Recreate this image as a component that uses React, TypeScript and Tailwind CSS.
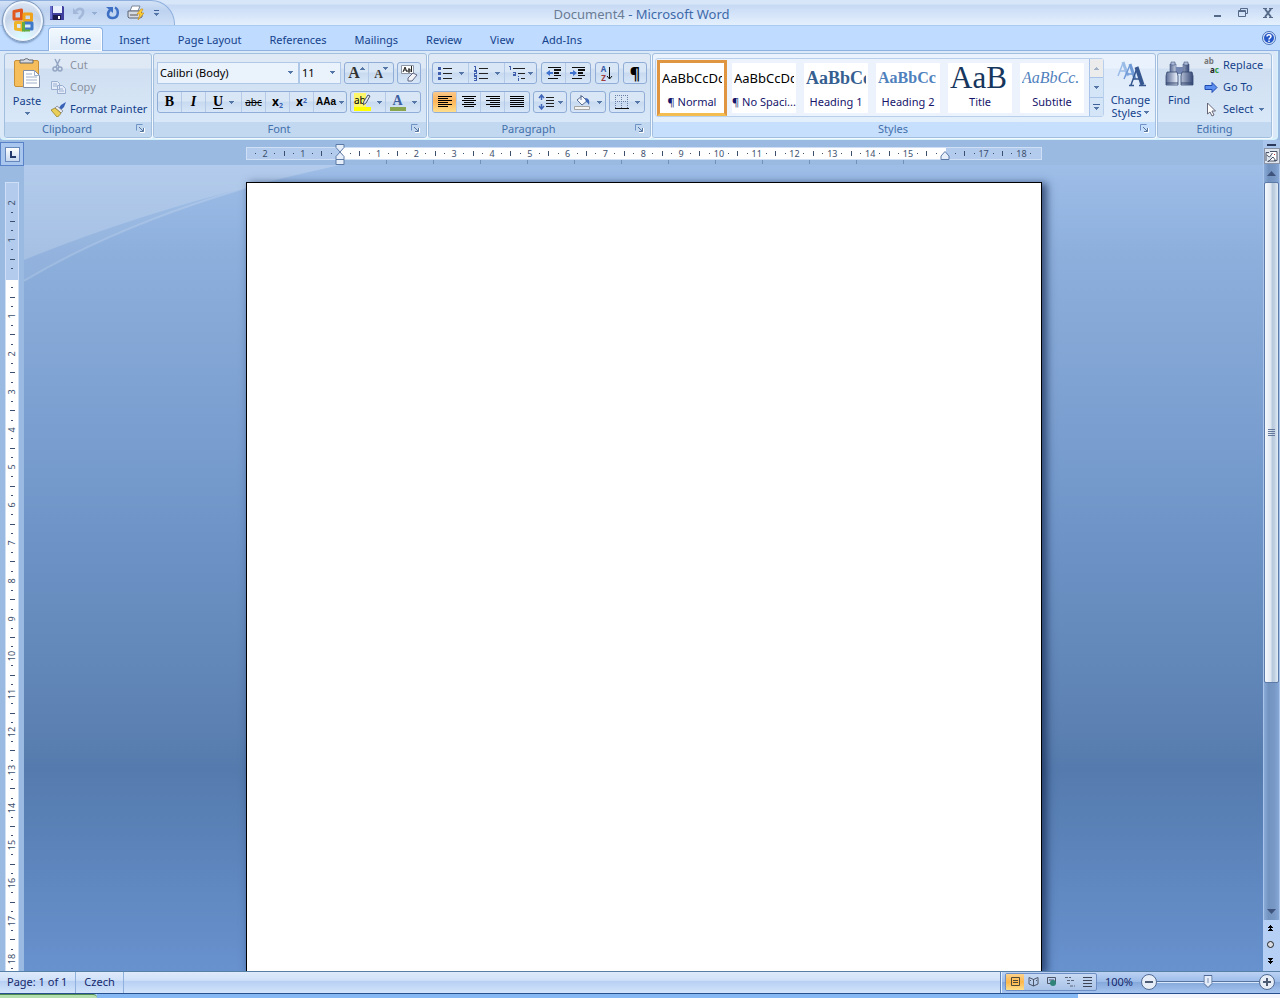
import type { ReactNode } from "react";
import clsx from "clsx";

const tabs = ["Insert", "Page Layout", "References", "Mailings", "Review", "View", "Add-Ins"];

const rulerMarks = Array.from({ length: 85 }, (_, i) => (i - 10) / 4);

function markFor(cm: number) {
  if (cm === 0 || cm === 16 || cm > 18.25) return null;
  if (Number.isInteger(cm)) return String(Math.abs(cm));
  if (Number.isInteger(cm * 2)) return "tick";
  return "dot";
}

function Caret({ className }: { className?: string }) {
  return (
    <svg viewBox="0 0 5 3" className={clsx("h-[3px] w-[5px] shrink-0", className)} shapeRendering="crispEdges" aria-hidden="true">
      <path d="M0 0h5v1H4v1H3v1H2V2H1V1H0z" fill="#5577a8" />
    </svg>
  );
}

function Group({ title, width, launcher = true, active, children }: { title: string; width: string; launcher?: boolean; active?: boolean; children: ReactNode }) {
  return (
    <section
      className={clsx(
        "flex h-[85px] shrink-0 flex-col overflow-hidden rounded-[3px] border border-[#a3bfdf] shadow-[1px_1px_0_#f3f9ff]",
        active
          ? "bg-[linear-gradient(#e9f2fd_0_14px,#dfebfa_15px,#e4effc_68px)]"
          : "bg-[linear-gradient(#dfe9f6_0_14px,#cfdff1_15px,#d9e8f8_68px)]",
        width,
      )}
    >
      <div className="min-h-0 flex-1">{children}</div>
      <div
        className={clsx(
          "relative h-[15px] text-center leading-[14px] text-[#4470ac]",
          active ? "bg-[#c6dffc]" : "bg-[#c1d8f0]",
          launcher && "pr-[22px]",
        )}
      >
        {title}
        {launcher && (
          <button aria-label={`${title} options`} className="absolute right-[6px] top-[2px]">
            <svg width="9" height="9" viewBox="0 0 9 9" fill="none" aria-hidden="true">
              <path d="M.5 6.500v-6h6" stroke="#6f93c4" />
              <path d="M3 3l4 4M7.500 4v3.500H4" stroke="#56759f" />
              <path d="M8.500 4v4.500H4" stroke="#fff" />
            </svg>
          </button>
        )}
      </div>
    </section>
  );
}

function Bar({ children }: { children: ReactNode }) {
  return (
    <div className="flex h-[22px] divide-x divide-[#b4cae6] overflow-hidden rounded-[3px] border border-[#8fadd6] bg-[linear-gradient(#d9e6f6_0_9px,#c8daf0_10px,#d7e6f8)]">
      {children}
    </div>
  );
}

function Tool({ label, width = "w-6", on, menu, children }: { label: string; width?: string; on?: boolean; menu?: boolean; children: ReactNode }) {
  return (
    <button
      aria-label={label}
      className={clsx("flex h-full shrink-0 items-center justify-center text-black", width, on && "bg-[linear-gradient(#fbc88a,#fdb458_45%,#fede8c)]")}
    >
      {children}
      {menu && <Caret className="ml-[6px]" />}
    </button>
  );
}

function Lines({ widths, align }: { widths: number[]; align: "l" | "c" | "r" }) {
  return (
    <svg width="14" height="12" viewBox="0 0 14 12" shapeRendering="crispEdges" aria-hidden="true">
      {widths.map((w, i) => (
        <rect key={i} x={align === "l" ? 0 : align === "r" ? 14 - w : (14 - w) / 2} y={i * 2} width={w} height="1" fill="#000" />
      ))}
    </svg>
  );
}

function OfficeButton() {
  return (
    <button
      aria-label="Office Button"
      className="absolute left-[2px] top-0 z-10 flex size-[42px] items-center justify-center rounded-full border border-[#7d97bb] bg-[radial-gradient(circle_at_50%_95%,#d8ffff,#dce8f6_35%,#c4d3e8_60%,#e9f0f9)] shadow-[inset_0_0_0_2px_#eef5fd,0_1px_2px_#6d8bb5]"
    >
      <svg width="24" height="26" viewBox="0 0 24 26" fill="none" strokeLinejoin="round" aria-hidden="true">
        <path d="M3 3.500 10.500 2v9H3z" stroke="#e2571d" strokeWidth="3" />
        <path d="M13 6h7.500v6.500H13z" stroke="#efa31c" strokeWidth="3" />
        <path d="M4.500 14.500H11V22l-6.500-1z" stroke="#efb52a" strokeWidth="3" />
        <path d="M13 15h8v6h-8" stroke="#3d78c9" strokeWidth="3" />
        <path d="M12.500 14v9.500" stroke="#62ac43" strokeWidth="3" />
        <path d="M13 22.500h6" stroke="#62ac43" strokeWidth="2" />
      </svg>
    </button>
  );
}

function TitleBar() {
  return (
    <header className="relative flex h-[26px] items-center border-b border-[#a8cbf0] bg-[linear-gradient(#d7e6f9_0_4px,#c6d9f4_5px,#e4f0fd)]">
      <div className="flex h-full w-[175px] shrink-0 items-center rounded-tr-[24px] border-r border-t border-[#8fb0de] bg-[linear-gradient(#d3e2f6,#bdd2f0_40%,#cfe0f7)] pl-[50px]">
        <button aria-label="Save" className="flex w-[22px]">
          <svg width="14" height="14" viewBox="0 0 14 14" aria-hidden="true">
            <path d="M0 0h13l1 1v13H0z" fill="#3f3f9e" />
            <path d="M3 0h9v7H3z" fill="#e8eefc" />
            <path d="M3 9h8v5H3z" fill="#1c1c4c" />
            <path d="M8 10h2v3H8z" fill="#fff" />
            <path d="M0 0h2v13H0z" fill="#6a70cf" />
          </svg>
        </button>
        <button aria-label="Undo" className="flex w-[20px]">
          <svg width="14" height="14" viewBox="0 0 14 14" fill="none" aria-hidden="true">
            <path d="M4 5c3-4 8-2 7 2-.5 3-3 3-4 6" stroke="#a3b8d9" strokeWidth="2.500" />
            <path d="M1 2v6h6z" fill="#a3b8d9" />
          </svg>
        </button>
        <button aria-label="Undo list" className="flex w-[14px]">
          <Caret className="opacity-40" />
        </button>
        <button aria-label="Repeat" className="flex w-[21px]">
          <svg width="14" height="14" viewBox="0 0 14 14" fill="none" aria-hidden="true">
            <path d="M9 1.500c4 2 4 10-2 10.500C1 12.500 1 7 4 4" stroke="#3d6fc4" strokeWidth="2.500" />
            <path d="M0 1h7v6z" fill="#3d6fc4" />
          </svg>
        </button>
        <button aria-label="Quick Print" className="flex w-[27px]">
          <svg width="17" height="16" viewBox="0 0 17 16" fill="none" aria-hidden="true">
            <path d="M5 1h8l-2 5H3z" fill="#fff" stroke="#7a8496" />
            <path d="M1 6h12l2 2v4l-2 1H2l-1-1z" fill="#d6dae2" stroke="#5b6474" />
            <path d="M3 10h8" stroke="#555" />
            <path d="M14 4l-4 5h3l-2 6 6-7h-3l2-4z" fill="#ffd23c" stroke="#c98a0b" strokeWidth=".6" />
          </svg>
        </button>
        <button aria-label="Customize Quick Access Toolbar" className="flex flex-col items-center gap-[2px]">
          <span className="h-px w-[5px] bg-[#3f6398]" />
          <Caret />
        </button>
      </div>
      <h1 className="flex-1 pt-[3px] text-center text-[13px] leading-4 text-[#3e6aaa]">
        <span className="text-[#6b7c95]">Document4</span> - Microsoft Word
      </h1>
      <div className="flex w-[172px] shrink-0 items-center justify-end gap-[15px] pr-[7px]">
        <button aria-label="Minimize">
          <svg width="10" height="10" viewBox="0 0 10 10" aria-hidden="true"><path d="M1 7h7v2H1z" fill="#556a88" /></svg>
        </button>
        <button aria-label="Restore">
          <svg width="10" height="9" viewBox="0 0 10 9" fill="none" aria-hidden="true">
            <path d="M2.500 2V.5h7v5H8" stroke="#556a88" />
            <path d="M.5 2.500h7v6h-7zM0 3.500h8" stroke="#556a88" />
          </svg>
        </button>
        <button aria-label="Close">
          <svg width="10" height="10" viewBox="0 0 10 10" fill="none" aria-hidden="true">
            <path d="M2 1l6 8M8 1L2 9" stroke="#556a88" strokeWidth="2" />
            <path d="M0 .5h4M6 .5h4M0 9.500h4M6 9.500h4" stroke="#556a88" />
          </svg>
        </button>
      </div>
    </header>
  );
}

function Tabs() {
  return (
    <nav className="flex h-[25px] items-end gap-1 border-b border-[#8db2e3] bg-[#bfdbff] pl-12 pr-[4px] pt-[2px] text-[#15428b]">
      <button className="-mb-px h-[24px] rounded-t-[4px] border border-b-0 border-[#8db2e3] bg-[linear-gradient(#f2f8fe,#dfebf9)] px-[11px] shadow-[inset_0_0_0_1px_#fff]">
        Home
      </button>
      {tabs.map((tab) => (
        <button key={tab} className="h-[23px] px-3 pt-[2px]">{tab}</button>
      ))}
      <button aria-label="Help" className="mb-[5px] ml-auto">
        <svg width="14" height="14" viewBox="0 0 14 14" fill="none" aria-hidden="true">
          <circle cx="7" cy="7" r="6.500" fill="#dbe8fa" stroke="#4a72b8" />
          <circle cx="7" cy="7" r="5" fill="#2658c8" />
          <path d="M5 5.500C5 3 9 3 9 5.500 9 7 7 7 7 8.500M7 9.500V11" stroke="#fff" strokeWidth="1.500" />
        </svg>
      </button>
    </nav>
  );
}

function ClipboardGroup() {
  return (
    <Group title="Clipboard" width="w-[148px]">
      <div className="flex text-[#15428b]">
        <button className="flex h-[67px] w-[46px] shrink-0 flex-col items-center pr-[2px] pt-[3px]">
          <svg width="28" height="32" viewBox="0 0 28 32" fill="none" aria-hidden="true">
            <rect x="1.500" y="3.500" width="24" height="26" rx="1.500" fill="#f5bd5c" stroke="#c8913a" />
            <path d="M7 6V3h4a3 3 0 0 1 5 0h4v3z" fill="#d5d9df" stroke="#60656f" />
            <path d="M10.500 13.500h11l5 5v12h-16z" fill="#fff" stroke="#8190a8" />
            <path d="M21.500 13.500v5h5M13 20h11M13 23h11M13 26h11M13 17h6" stroke="#9eafc9" />
          </svg>
          <span className="mt-1 leading-4">Paste</span>
          <Caret className="mt-[3px]" />
        </button>
        <div className="flex flex-col leading-[22px]">
          <button className="flex h-[22px] items-center gap-[5px] text-[#8b93a0]">
            <svg width="14" height="14" viewBox="0 0 14 14" fill="none" stroke="#93a5c2" aria-hidden="true">
              <path d="M4 1l4 8M9 1 5 9" strokeWidth="1.500" />
              <circle cx="4" cy="11" r="2" strokeWidth="1.500" />
              <circle cx="9" cy="11" r="2" strokeWidth="1.500" />
            </svg>
            Cut
          </button>
          <button className="flex h-[22px] items-center gap-[4px] text-[#8b93a0]">
            <svg width="15" height="13" viewBox="0 0 15 13" aria-hidden="true">
              <path d="M.5.5h6l2 2v6h-8zM6.500 4.500h5l3 3v5h-8z" fill="#e3ecf8" stroke="#9bb0d0" />
              <path d="M2 3h4M2 5h4M8 8h4M8 10h5" stroke="#9bb0d0" />
            </svg>
            Copy
          </button>
          <button className="flex h-[22px] items-center gap-[3px]">
            <svg width="16" height="15" viewBox="0 0 16 15" aria-hidden="true">
              <path d="M15 0l-5 3-2 3 2 2 3-3z" fill="#3762b8" />
              <path d="M6 4l6 5-2 2-6-5z" fill="#e8eaf0" stroke="#767c8a" strokeWidth=".7" />
              <path d="M4 6l6 5c-1 2-3 4-4 4L0 8c1-1 3-1 4-2z" fill="#e9cf57" stroke="#8a7420" strokeWidth=".7" />
            </svg>
            Format Painter
          </button>
        </div>
      </div>
    </Group>
  );
}

function Combo({ label, value, width }: { label: string; value: string; width: string }) {
  return (
    <div className={clsx("relative h-[22px] border border-[#b0c8e8] bg-[#eaf2fb]", width)}>
      <select aria-label={label} className="size-full appearance-none pl-[2px] text-black outline-none">
        <option>{value}</option>
      </select>
      <Caret className="pointer-events-none absolute right-[5px] top-[8px]" />
    </div>
  );
}

function FontGroup() {
  return (
    <Group title="Font" width="w-[274px]">
      <div className="flex flex-col gap-[7px] px-[3px] pt-[8px]">
        <div className="flex gap-[3px]">
          <div className="flex">
            <Combo label="Font" value="Calibri (Body)" width="w-[142px]" />
            <Combo label="Font size" value="11" width="w-[42px]" />
          </div>
          <Bar>
            <Tool label="Grow Font"><span className="font-['Liberation_Serif'] text-[16px] font-bold text-[#333]">A</span><Caret className="mb-[9px] rotate-180" /></Tool>
            <Tool label="Shrink Font"><span className="pt-[2px] font-['Liberation_Serif'] text-[12px] font-bold text-[#333]">A</span><Caret className="mb-[9px]" /></Tool>
          </Bar>
          <Bar>
            <Tool label="Clear Formatting" width="w-[22px]">
              <svg width="17" height="17" viewBox="0 0 17 17" fill="none" aria-hidden="true">
                <path d="M.5.5h12v8H.5z" fill="#fff" stroke="#8e97a8" />
                <path d="M2 7l2-5 2 5M3 5h2M7 4h2v3H7V5h2M10.500 1v6" stroke="#222" />
                <path d="M7 13l5-5 4 2-5 6H7z" fill="#f1f2f8" stroke="#5f6680" />
              </svg>
            </Tool>
          </Bar>
        </div>
        <div className="flex gap-[3px] font-['Liberation_Serif']">
          <Bar>
            <Tool label="Bold"><b className="text-[14px]">B</b></Tool>
            <Tool label="Italic"><b className="text-[14px] italic">I</b></Tool>
            <Tool label="Underline" width="w-9" menu><b className="text-[14px] underline underline-offset-2">U</b></Tool>
            <Tool label="Strikethrough"><span className="font-['Noto_Sans'] text-[10px] line-through">abc</span></Tool>
            <Tool label="Subscript"><span className="font-['Noto_Sans'] text-[12px] font-bold">x<sub className="text-[7px] text-[#3a61b4]">2</sub></span></Tool>
            <Tool label="Superscript"><span className="font-['Noto_Sans'] text-[12px] font-bold">x<sup className="text-[7px] text-[#3a61b4]">2</sup></span></Tool>
            <Tool label="Change Case" width="w-8"><span className="mr-[3px] font-['Liberation_Sans'] text-[10px] font-bold">AAa</span><Caret /></Tool>
          </Bar>
          <Bar>
            <Tool label="Text Highlight Color" width="w-[35px]" menu>
              <span className="relative w-[17px] border-b-4 border-[#ffff00] text-left font-['Noto_Sans'] text-[10px] leading-[13px]">
                <span className="bg-[#fdf56a]">ab</span>
                <svg className="absolute right-0 top-0" width="8" height="12" viewBox="0 0 8 12" aria-hidden="true">
                  <path d="M5 1l2 1-4 7-3 2 1-4z" fill="#e4eaf4" stroke="#49566d" />
                </svg>
              </span>
            </Tool>
            <Tool label="Font Color" width="w-[34px]" menu>
              <span className="w-4 border-b-4 border-[#89a54e] text-center text-[14px] font-bold leading-[13px] text-[#3e5f9f]">A</span>
            </Tool>
          </Bar>
        </div>
      </div>
    </Group>
  );
}

function ListIcon({ kind }: { kind: "bullets" | "numbers" | "multi" }) {
  return (
    <svg width="16" height="15" viewBox="0 0 16 15" fill="none" shapeRendering="crispEdges" aria-hidden="true">
      {kind === "bullets" && <path d="M1 1h3v3H1zM1 6h3v3H1zM1 11h3v3H1z" fill="#3f5fae" />}
      {kind === "numbers" && <path d="M1 .5h1.500V4M1 4h3M1 5.500h2.500v2H1v2h3M1 10.500h2.500v4H1M1 12.500h2.500" stroke="#3f5fae" />}
      {kind === "multi" ? (
        <>
          <path d="M0 .5h1.500V4M4 6.500h2.500v3H4v-1h2M9.500 10v1M9.500 12v3" stroke="#3f5fae" />
          <path d="M4 2.500h12M9 7.500h7M12 12.500h4" stroke="#222" />
        </>
      ) : (
        <path d="M6 2.500h9M6 7.500h9M6 12.500h9" stroke="#222" />
      )}
    </svg>
  );
}

function IndentIcon({ flip }: { flip?: boolean }) {
  return (
    <svg width="16" height="14" viewBox="0 0 16 14" aria-hidden="true">
      <path d="M2 1h13v1H2zM8 3h7v2H8zM8 6h5v2H8zM8 9h7v1H8zM2 12h10v1H2z" fill="#111" />
      <path d={flip ? "M7 7L3 4v2H0v2h3v2z" : "M0 7l4-3v2h3v2H4v2z"} fill="#3f72cf" />
    </svg>
  );
}

function ParagraphGroup() {
  return (
    <Group title="Paragraph" width="w-[223px]">
      <div className="flex flex-col gap-[7px] px-[3px] pt-[8px]">
        <div className="flex gap-1">
          <Bar>
            <Tool label="Bullets" width="w-9" menu><ListIcon kind="bullets" /></Tool>
            <Tool label="Numbering" width="w-9" menu><ListIcon kind="numbers" /></Tool>
            <Tool label="Multilevel List" width="w-[31px]"><ListIcon kind="multi" /><Caret className="ml-[3px]" /></Tool>
          </Bar>
          <Bar>
            <Tool label="Decrease Indent"><IndentIcon /></Tool>
            <Tool label="Increase Indent"><IndentIcon flip /></Tool>
          </Bar>
          <Bar>
            <Tool label="Sort" width="w-[22px]">
              <span className="flex flex-col text-[8px] font-bold leading-[9px] text-[#3a5aa8]">A<span className="text-[#a03a40]">Z</span></span>
              <svg width="7" height="15" viewBox="0 0 7 15" fill="none" aria-hidden="true"><path d="M3.500 1v12M1 10l2.500 3L6 10" stroke="#111" /></svg>
            </Tool>
          </Bar>
          <Bar>
            <Tool label="Show paragraph marks" width="w-[22px]"><span className="text-[16px] font-bold">¶</span></Tool>
          </Bar>
        </div>
        <div className="flex gap-[3px]">
          <Bar>
            <Tool label="Align Left" on><Lines align="l" widths={[14, 10, 14, 10, 14, 10]} /></Tool>
            <Tool label="Center"><Lines align="c" widths={[14, 10, 14, 10, 14, 10]} /></Tool>
            <Tool label="Align Right"><Lines align="r" widths={[14, 10, 14, 10, 14, 10]} /></Tool>
            <Tool label="Justify"><Lines align="l" widths={[14, 14, 14, 14, 14, 14]} /></Tool>
          </Bar>
          <Bar>
            <Tool label="Line Spacing" width="w-8">
              <svg width="16" height="16" viewBox="0 0 16 16" fill="none" aria-hidden="true">
                <path d="M3.500 1v5M3.500 10v5M1 4l2.500-3L6 4M1 12l2.500 3L6 12" stroke="#3f66b8" strokeWidth="1.500" />
                <path d="M8 3.500h8M8 6.500h8M8 9.500h8M8 12.500h8" stroke="#222" />
              </svg>
              <Caret className="ml-1" />
            </Tool>
          </Bar>
          <Bar>
            <Tool label="Shading" width="w-[34px]" menu>
              <svg width="17" height="16" viewBox="0 0 17 16" aria-hidden="true">
                <path d="M3 6l5-4 5 5-5 4z" fill="#f7f9fd" stroke="#5b6e93" />
                <path d="M7 6V1" stroke="#5b6e93" />
                <path d="M11 4c4 0 5 3 4 7-1-2-2-3-3-3z" fill="#3e67b5" />
                <path d="M.5 12.500h15v3H.5z" fill="#f4f4f4" stroke="#a5a5a5" />
              </svg>
            </Tool>
          </Bar>
          <Bar>
            <Tool label="Borders" width="w-[34px]" menu>
              <svg width="14" height="14" viewBox="0 0 14 14" fill="none" shapeRendering="crispEdges" aria-hidden="true">
                <path d="M.5 0v13M6.500 0v13M12.500 0v13M0 .5h13M0 6.500h13" stroke="#6980a6" strokeDasharray="1 1" />
                <path d="M0 13.500h14" stroke="#111" />
              </svg>
            </Tool>
          </Bar>
        </div>
      </div>
    </Group>
  );
}

const styleCards = [
  { name: "¶ Normal", sample: "AaBbCcDc", look: "text-[13px] text-black" },
  { name: "¶ No Spaci...", sample: "AaBbCcDc", look: "text-[13px] text-black" },
  { name: "Heading 1", sample: "AaBbCc", look: "font-['Liberation_Serif'] text-[18px] font-bold text-[#365f91]" },
  { name: "Heading 2", sample: "AaBbCc", look: "font-['Liberation_Serif'] text-[16px] font-bold text-[#4f81bd]" },
  { name: "Title", sample: "AaB", look: "font-['Liberation_Serif'] text-[31px] text-[#17365d]" },
  { name: "Subtitle", sample: "AaBbCc.", look: "font-['Liberation_Serif'] text-[16px] italic text-[#4f81bd]" },
];

function StylesGroup() {
  return (
    <Group title="Styles" width="w-[504px]" active>
      <div className="flex pl-[2px] pt-[4px]">
        <div className="flex h-[59px] w-[449px] items-center rounded-[3px] border border-[#b9d0ed] bg-[#ecf3fc] pl-px">
          <div className="flex flex-1 gap-[2px]">
            {styleCards.map((card, i) => (
              <button
                key={card.name}
                className={clsx(
                  "flex h-[56px] w-[70px] flex-col border-3 bg-white",
                  i === 0 ? "border-[#e09540] border-b-[#f3bd4f]" : "border-[#ecf3fc]",
                )}
              >
                <span className="h-[31px] w-full px-[2px]">
                  <span className={clsx("flex h-full items-center overflow-hidden whitespace-nowrap", card.look)}>{card.sample}</span>
                </span>
                <span className="w-full whitespace-nowrap text-center leading-4 text-[#15156b]">{card.name}</span>
              </button>
            ))}
          </div>
          <div className="flex h-full w-[14px] flex-col divide-y divide-[#a9c4e8] border-l border-[#a9c4e8] bg-[#d5e5f8]">
            <button aria-label="Row up" className="flex flex-1 items-center justify-center bg-[#ececec]"><Caret className="rotate-180 opacity-50" /></button>
            <button aria-label="Row down" className="flex flex-1 items-center justify-center"><Caret /></button>
            <button aria-label="More styles" className="flex flex-1 flex-col items-center justify-center gap-[2px]">
              <span className="h-px w-[7px] bg-[#3f6398]" />
              <Caret />
            </button>
          </div>
        </div>
        <button className="flex flex-1 flex-col items-center pl-[2px] leading-[13px] text-[#15428b]">
          <svg width="30" height="30" viewBox="0 0 30 30" fill="none" aria-hidden="true">
            <path d="M2 18L7 5M4 13h6" stroke="#9cbce8" strokeWidth="1.500" />
            <path d="M7 4l5 14" stroke="#9cbce8" strokeWidth="3" />
            <path d="M8 21l6-14M11 16h6" stroke="#6f9ad6" strokeWidth="1.500" />
            <path d="M14 6l5 15" stroke="#6f9ad6" strokeWidth="3" />
            <path d="M15 27l6-17M17 21h8M13 27.500h5M23 27.500h7" stroke="#36578f" strokeWidth="1.500" />
            <path d="M20.500 9l6 18" stroke="#36578f" strokeWidth="4" />
          </svg>
          <span className="mt-[5px]">Change</span>
          <span className="flex items-center gap-[3px]">Styles <Caret /></span>
        </button>
      </div>
    </Group>
  );
}

function EditingGroup() {
  return (
    <Group title="Editing" width="w-[115px]" launcher={false}>
      <div className="flex text-[#15428b]">
        <button className="flex h-[67px] w-[46px] shrink-0 flex-col items-center pr-[4px] pt-[6px]">
          <svg width="29" height="29" viewBox="0 0 29 29" aria-hidden="true">
            <defs>
              <linearGradient id="barrel">
                <stop stopColor="#5a6b94" />
                <stop offset=".4" stopColor="#e4ebf8" />
                <stop offset="1" stopColor="#344775" />
              </linearGradient>
            </defs>
            <path d="M5 4h6v9H5zM18 4h6v9h-6z" fill="url(#barrel)" stroke="#465a88" strokeWidth=".6" />
            <path d="M6 2h4v3H6zM19 2h4v3h-4z" fill="#aebbd6" stroke="#465a88" strokeWidth=".6" />
            <path d="M11 7h7v7h-7z" fill="#7487b3" />
            <path d="M2 12h10l1 4v9H1v-9zM17 12h10l1 4v9H16v-9z" fill="url(#barrel)" stroke="#33466f" strokeWidth=".8" />
            <path d="M1 23h12M16 23h12" stroke="#33466f" />
          </svg>
          <span className="mt-[3px] leading-4">Find</span>
        </button>
        <div className="flex flex-col">
          <button className="flex h-[22px] items-center gap-[3px]">
            <span aria-hidden="true" className="w-4 text-left text-[8px] font-bold leading-[9px] text-[#777]">
              <span className="block">ab</span>
              <span className="block pl-[6px] text-[#222]">a<span className="text-[#2f9e3c]">c</span></span>
            </span>
            Replace
          </button>
          <button className="flex h-[22px] items-center gap-[5px]">
            <svg width="14" height="11" viewBox="0 0 14 11" aria-hidden="true">
              <path d="M1 3.500h7v-3l5 5-5 5v-3H1z" fill="#5d8ff0" stroke="#1f4bb0" />
            </svg>
            Go To
          </button>
          <button className="flex h-[22px] items-center gap-[5px]">
            <svg width="14" height="15" viewBox="0 0 14 15" aria-hidden="true">
              <path d="M3.500 1v11l2.500-2 2 4 2-1-2-4h3.500z" fill="#fff" stroke="#667" />
            </svg>
            Select <Caret />
          </button>
        </div>
      </div>
    </Group>
  );
}

function HorizontalRuler() {
  return (
    <div className="h-[25px] shrink-0 bg-[#9bbae2] pt-[7px]">
      <div className="relative mx-auto w-[796px] text-[9px] text-[#3c4f6e]">
        <div className="h-[13px] overflow-hidden border border-[#cfe0f6] bg-[linear-gradient(90deg,#b3cbec_94px,#fff_94px,#fff_699px,#b3cbec_699px)]">
          <div className="-mx-[5px] flex h-full items-center">
            {rulerMarks.map((cm) => {
              const mark = markFor(cm);
              return (
                <span key={cm} className="flex w-0 flex-1 items-center justify-center">
                  {mark === "tick" ? <i className="h-[5px] w-px bg-current" /> : mark === "dot" ? <i className="size-px bg-current" /> : mark}
                </span>
              );
            })}
          </div>
        </div>
        <div className="ml-[94px] h-1 w-[567px] bg-[repeating-linear-gradient(90deg,transparent_0_46px,#7390bb_46px_47px)]" />
        <svg className="absolute -top-[3px] left-[89px]" width="10" height="22" viewBox="0 0 10 22" fill="#e6eefa" stroke="#5d7aa6" aria-hidden="true">
          <path d="M1 .5h8v3L5 8 1 3.500z" />
          <path d="M5 8l4 4.500v3H1v-3z" />
          <path d="M1 15.500h8v5H1z" />
        </svg>
        <svg className="absolute left-[694px] top-[4px]" width="10" height="10" viewBox="0 0 10 10" fill="#e6eefa" stroke="#5d7aa6" aria-hidden="true">
          <path d="M5 .5l4 4.500v3.500H1V5z" />
        </svg>
      </div>
    </div>
  );
}

function VerticalRuler() {
  return (
    <div className="flex w-6 shrink-0 flex-col bg-[#9bbae2]">
      <button aria-label="Left Tab" className="mt-[2px] flex size-6 shrink-0 items-center justify-center border border-[#5a82c8] bg-[#a9c6ee] text-[#24396b]">
        <span className="flex size-[15px] items-center justify-center border border-[#6788bd] bg-[linear-gradient(#fff,#c5d6ee)]">
          <svg width="7" height="7" viewBox="0 0 7 7" aria-hidden="true"><path d="M1 0h2v5h4v2H1z" fill="currentColor" /></svg>
        </span>
      </button>
      <div className="ml-[5px] mt-4 min-h-0 w-[14px] flex-1 overflow-hidden border-x border-t border-[#cfe0f6] bg-[linear-gradient(#b3cbec_97px,#fff_97px)] text-[9px] text-[#3c4f6e]">
        <div className="-mt-[4px] flex h-[803px] flex-col">
          {rulerMarks.map((cm) => {
            const mark = cm <= -2.25 ? null : cm === 16 ? "16" : markFor(cm);
            return (
              <span key={cm} className="flex h-0 flex-1 items-center justify-center">
                {mark === "tick" ? <i className="h-px w-[5px] bg-current" /> : mark === "dot" ? <i className="h-px w-[2px] bg-current" /> : <span className="-rotate-90">{mark}</span>}
              </span>
            );
          })}
        </div>
      </div>
    </div>
  );
}

function ScrollBar() {
  return (
    <div className="flex w-[17px] shrink-0 flex-col items-center bg-[#a9c5eb] pt-[4px]">
      <div className="mb-[2px] h-[2px] w-[9px] shrink-0 bg-[#2b3a5c]" />
      <button aria-label="View Ruler" className="flex size-4 shrink-0 items-center justify-center border border-[#8b95a8] bg-[#dde4ee]">
        <svg width="13" height="13" viewBox="0 0 13 13" fill="none" stroke="#4a5468" aria-hidden="true">
          <path d="M1 11V2.500h3" />
          <path d="M5 1.500h7v9H9M1.500 5l3 2 3-4M3 12l5-5 3 4H3z" fill="#fff" />
          <path d="M9.500 4v1" stroke="#c33" />
        </svg>
      </button>
      <div className="flex w-[15px] flex-1 flex-col bg-[linear-gradient(90deg,#8aaad8,#7292bf_30%,#7898c6_70%,#86a8d6)]">
        <button aria-label="Scroll up" className="flex h-[18px] shrink-0 items-center justify-center">
          <svg width="9" height="5" viewBox="0 0 9 5" aria-hidden="true"><path d="M0 5l4.500-5L9 5z" fill="#3f547d" /></svg>
        </button>
        <div className="flex h-[501px] shrink-0 flex-col items-center justify-center gap-px rounded-[2px] border border-[#5c7aa8] bg-[linear-gradient(90deg,#f6f9fd,#dfe7f1_45%,#b7c8db_55%,#c2d1e2_75%,#e3ecf6)]">
          {[0, 1, 2, 3].map((i) => (
            <span key={i} className="h-px w-[7px] bg-[#64789b]" />
          ))}
        </div>
        <button aria-label="Scroll down" className="mt-auto flex h-[18px] shrink-0 items-center justify-center">
          <svg width="9" height="5" viewBox="0 0 9 5" aria-hidden="true"><path d="M0 0h9L4.500 5z" fill="#3f547d" /></svg>
        </button>
      </div>
      <div className="flex h-[51px] w-full shrink-0 flex-col items-center justify-around bg-[#b5cff5] pb-[2px] pr-[2px]">
        <button aria-label="Previous Page">
          <svg width="5" height="7" viewBox="0 0 5 7" shapeRendering="crispEdges" aria-hidden="true"><path d="M2 0h1v1h1v1h1v1H0V2h1V1h1zM2 3h1v1h1v1h1v1H0V5h1V4h1z" fill="#000" /></svg>
        </button>
        <button aria-label="Select Browse Object" className="size-[7px] rounded-full border border-[#222] bg-[#d8dce2]" />
        <button aria-label="Next Page">
          <svg width="5" height="7" viewBox="0 0 5 7" shapeRendering="crispEdges" aria-hidden="true"><path d="M0 1h5v1H4v1H3v1H2V3H1V2H0zM0 4h5v1H4v1H3v1H2V6H1V5H0z" fill="#000" /></svg>
        </button>
      </div>
    </div>
  );
}

function DocumentArea() {
  return (
    <main className="relative min-h-0 flex-1 overflow-hidden bg-[linear-gradient(#9ebee8,#8dafdc_11%,#6f95c8_45%,#5b80b1_70%,#557bae_75%,#6892ce)] pt-[17px]">
      <svg className="absolute left-0 top-0" width="320" height="120" viewBox="0 0 320 120" fill="none" aria-hidden="true">
        <path d="M0 0H316Q140 38 0 95z" fill="#fff" fillOpacity=".22" />
        <path d="M0 95Q140 38 316 0L221 23Q90 62 0 116z" fill="#fff" fillOpacity=".06" />
        <path d="M0 116Q90 62 221 23" stroke="#fff" strokeOpacity=".15" strokeWidth="2" />
      </svg>
      <div className="relative mx-auto h-full w-[796px] border border-b-0 border-black bg-white shadow-[4px_2px_8px_1px_rgba(20,40,80,0.7)]" />
    </main>
  );
}

function ZoomButton({ label, plus }: { label: string; plus?: boolean }) {
  return (
    <button aria-label={label} className="shrink-0">
      <svg width="16" height="16" viewBox="0 0 16 16" fill="none" aria-hidden="true">
        <circle cx="8" cy="8" r="7.500" fill="#e7edf6" stroke="#4f6a94" />
        <path d={plus ? "M4 8h8M8 4v8" : "M4 8h8"} stroke="#4c5a73" strokeWidth="2" />
      </svg>
    </button>
  );
}

const views = [
  { name: "Print Layout", icon: <path d="M1.500 1.500h8v8h-8zM3 4.500h5M3 6.500h5" stroke="#4f4a35" /> },
  { name: "Full Screen Reading", icon: <path d="M5.500 3v7M1 1.500l4.500 2 4.500-2V8l-4.500 2L1 8zM2.500 4v1M8.500 4v1" stroke="#4c5468" /> },
  { name: "Web Layout", icon: <><path d="M1.500 1.500h8v6h-8zM3 4h5" stroke="#4c5468" /><circle cx="7" cy="7" r="3" fill="#2f8379" /></> },
  { name: "Outline", icon: <path d="M1 1.500h6M3 4.500h7M3 7.500h3M6 10h5" stroke="#5c6478" strokeDasharray="3 1" /> },
  { name: "Draft", icon: <path d="M1 1.500h9M1 4.500h9M1 7.500h9M1 10.500h9" stroke="#3e4557" /> },
];

function StatusBar() {
  return (
    <footer className="shrink-0">
      <div className="flex h-[23px] border-b border-t border-b-[#26508f] border-t-[#5680a5] bg-[linear-gradient(#dfebfc,#cfe0f8_40%,#b8d0f3_45%,#d3e5fc)] text-[#15286b]">
        <button className="border-r border-[#90b0dd] pb-[2px] pl-[7px] pr-[8px]">Page: 1 of 1</button>
        <button className="border-r border-[#90b0dd] px-[8px] pb-[2px]">Czech</button>
        <div className="ml-auto flex w-[280px] items-center border-l border-[#5f84bc] bg-[linear-gradient(#bcd3f4,#9dbce8_45%,#86a9dc_50%,#a5c4ef)] pb-px pl-[4px] shadow-[inset_1px_0_0_#e5f0ff]">
          <div className="flex h-[18px] shrink-0 overflow-hidden rounded-[2px] border border-[#6c8ec4] bg-[linear-gradient(#c8daf3,#a9c3e8)]">
            {views.map((view, i) => (
              <button
                key={view.name}
                aria-label={view.name}
                className={clsx("flex w-[18px] items-center justify-center", i === 0 && "bg-[linear-gradient(#fbd28d,#fdb64a_50%,#fee08c)]")}
              >
                <svg width="11" height="12" viewBox="0 0 11 12" fill="none" aria-hidden="true">{view.icon}</svg>
              </button>
            ))}
          </div>
          <button className="w-[44px] shrink-0 text-center">100%</button>
          <ZoomButton label="Zoom Out" />
          <div className="relative flex h-full flex-1 items-center">
            <input type="range" aria-label="Zoom" min={0} max={100} defaultValue={50} className="absolute inset-0 w-full opacity-0" />
            <div className="h-[2px] w-full border-b border-[#d9e7fb] bg-[#57749f]" />
            <svg className="pointer-events-none absolute left-1/2 top-[3px] -translate-x-1/2" width="9" height="14" viewBox="0 0 9 14" aria-hidden="true">
              <path d="M.5.500h8v8l-4 4-4-4z" fill="#e4edf9" stroke="#4f6a94" />
              <path d="M4.500 3v5" stroke="#7b90b3" />
            </svg>
          </div>
          <ZoomButton label="Zoom In" plus />
          <div className="w-[5px]" />
        </div>
      </div>
      <div className="flex h-1">
        <div className="w-[97px] rounded-tr-[4px] border-t border-[#4f8a4f] bg-[#b5dfae]" />
        <div className="flex-1 bg-[#86b9f3]" />
        <div className="w-[202px] bg-[#f3f5fd]" />
      </div>
    </footer>
  );
}

export default function App() {
  return (
    <div className="relative flex h-screen flex-col overflow-hidden bg-[#bfdbff] font-['Noto_Sans',sans-serif] text-[11px] leading-4">
      <OfficeButton />
      <TitleBar />
      <Tabs />
      <div className="shrink-0 bg-[#9bbae2]">
        <div className="mr-[2px] flex h-[89px] gap-px rounded-b-[4px] border-b-2 border-r border-[#d5f1fb] bg-[#dbe8f8] pl-[4px] pt-[2px]">
          <ClipboardGroup />
          <FontGroup />
          <ParagraphGroup />
          <StylesGroup />
          <EditingGroup />
        </div>
      </div>
      <div className="flex min-h-0 flex-1">
        <VerticalRuler />
        <div className="flex min-w-0 flex-1 flex-col">
          <HorizontalRuler />
          <DocumentArea />
        </div>
        <ScrollBar />
      </div>
      <StatusBar />
    </div>
  );
}
